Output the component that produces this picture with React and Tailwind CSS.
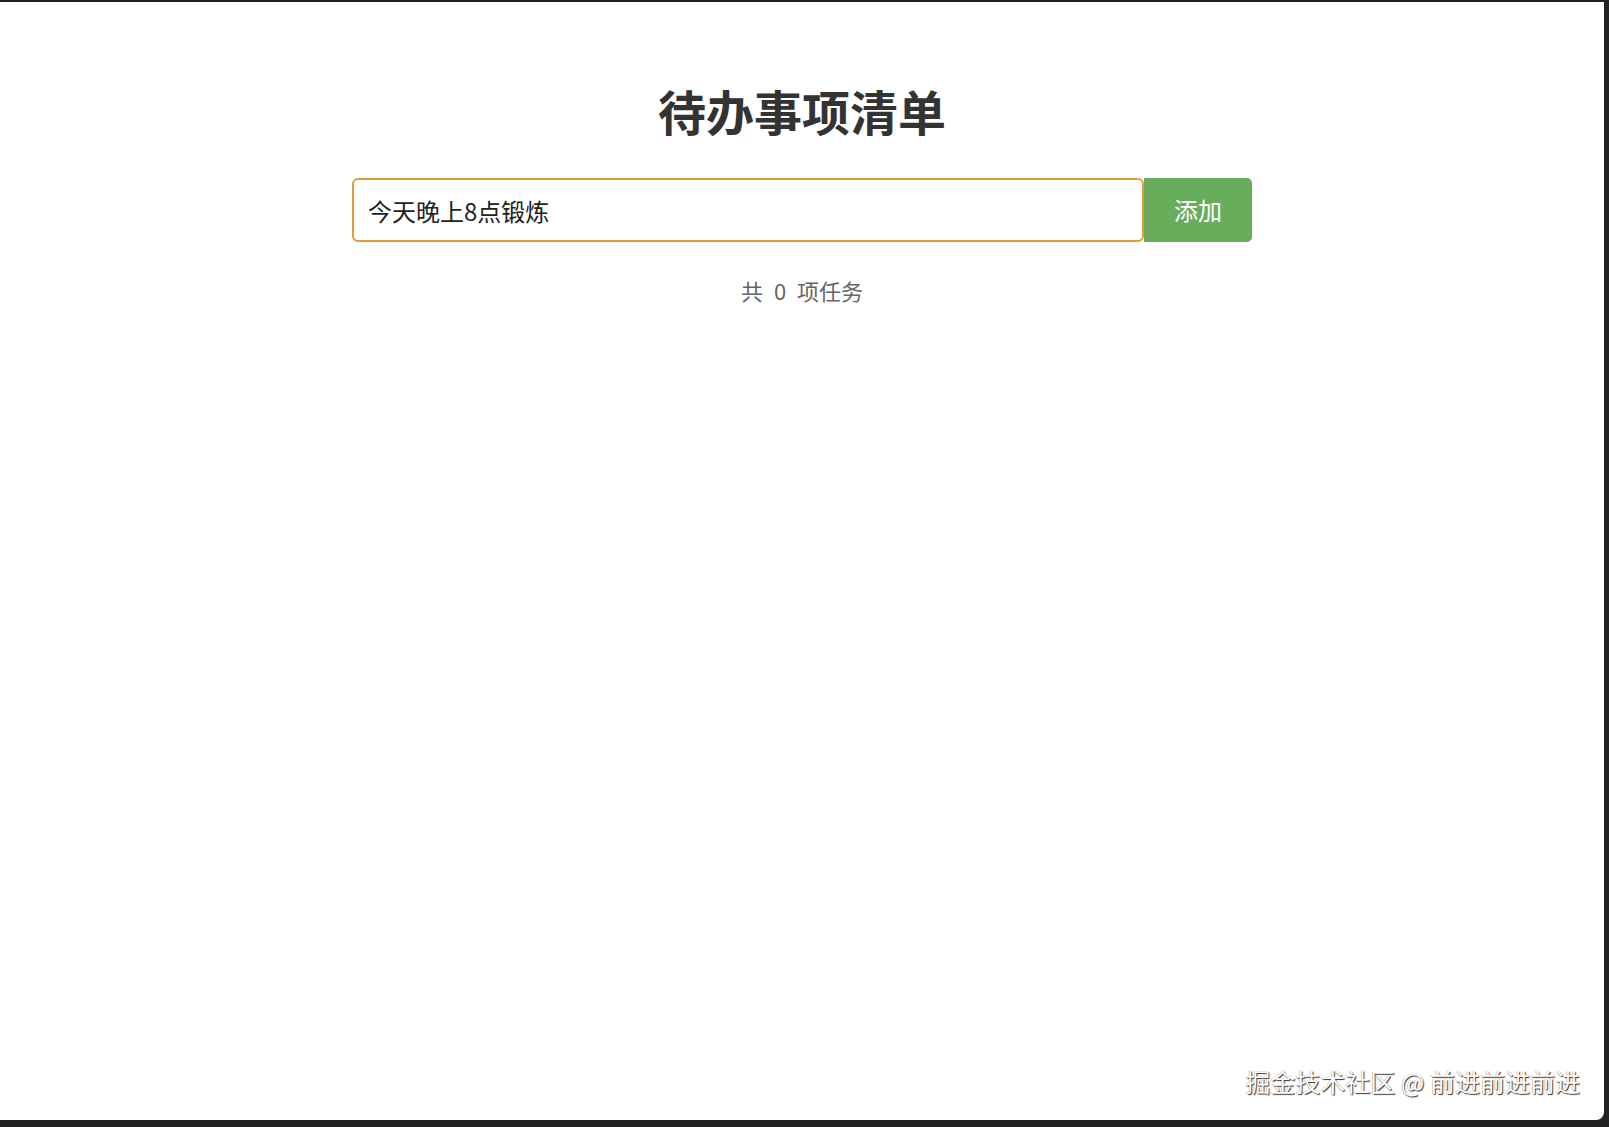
import React, { useEffect, useRef, useState } from "react";

const font = { fontFamily: '"Noto Sans CJK SC", "Noto Sans", sans-serif' };

export default function App() {
  const [text, setText] = useState("今天晚上8点锻炼");
  const [todos, setTodos] = useState([]);
  const inputRef = useRef(null);

  useEffect(() => {
    const el = inputRef.current;
    if (el) {
      el.focus();
      el.setSelectionRange(el.value.length, el.value.length);
    }
  }, []);

  const addTodo = () => {
    if (!text.trim()) return;
    setTodos([...todos, text.trim()]);
    setText("");
  };

  return (
    <div className="h-[1127px] w-[1609px] bg-[#222222] pt-[2px]" style={font}>
      <div className="relative h-[1118px] w-[1604px] rounded-br-[8px] bg-white pt-[84px]">
        <h1 className="text-center text-[48px] font-bold leading-none text-[#333333]">待办事项清单</h1>

        <div className="mx-auto mt-[44px] flex h-[64px] w-[900px]">
          <input
            ref={inputRef}
            value={text}
            onChange={(e) => setText(e.target.value)}
            onKeyDown={(e) => e.key === "Enter" && addTodo()}
            className="h-full flex-1 rounded-[6px] border-[2.5px] border-[#e39b3a] px-[14px] text-[24px] text-[#222222] caret-black outline-none"
          />
          <button
            onClick={addTodo}
            className="h-full rounded-r-[5px] bg-[#67ad5b] px-[30px] text-[24px] text-white"
          >
            添加
          </button>
        </div>

        {todos.length > 0 ? (
          <ul className="mx-auto mt-[20px] w-[900px]">
            {todos.map((t, i) => (
              <li key={i} className="border-b border-gray-200 py-3 text-[22px] text-[#333333]">
                {t}
              </li>
            ))}
          </ul>
        ) : null}

        <div className="mt-[32px] text-center text-[22px] leading-[1.5] text-[#666666] [word-spacing:6px]">
          共 {todos.length} 项任务
        </div>

        <div className="absolute bottom-[26px] right-[24px] text-[25px] leading-none text-white [text-shadow:1px_1px_1px_rgba(0,0,0,0.8),-0.5px_-0.5px_0_rgba(0,0,0,0.4)]">
          掘金技术社区 @ 前进前进前进
        </div>
      </div>
    </div>
  );
}
